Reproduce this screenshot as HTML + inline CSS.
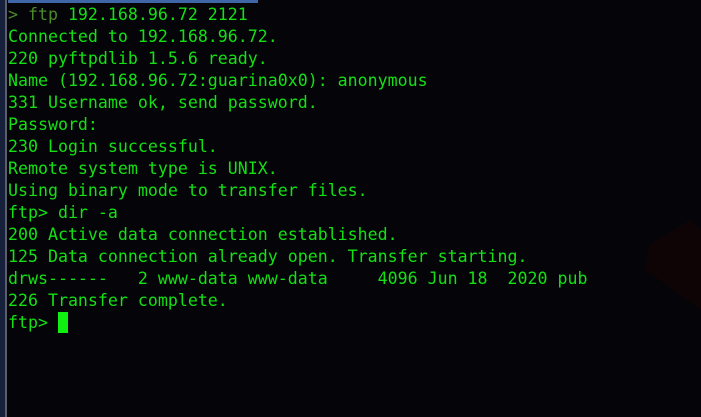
<!DOCTYPE html><html><head><style>
body{margin:0;width:701px;height:417px;overflow:hidden;background:#050408;position:relative;font-family:"DejaVu Sans Mono","Liberation Mono",monospace;}
.l{position:absolute;left:0;top:0;width:5px;height:417px;background:#16203a}
.g{position:absolute;left:5px;top:0;width:2px;height:417px;background:#5a5e66}
.b{position:absolute;left:8px;top:0;width:250px;height:3px;background:#3f67a8}
pre{position:absolute;left:8px;top:4px;margin:0;font-size:16.6px;line-height:22px;color:#14e014;font-family:inherit}
.d{color:#4a8a2a}
.c{display:inline-block;width:10px;height:21px;background:#10f010;vertical-align:-5px}
</style></head><body>
<div class="l"></div><div class="g"></div><div class="b"></div>
<svg style="position:absolute;left:600px;top:210px" width="101" height="207"><polygon points="50,35 90,10 101,20 101,100 60,70 45,60" fill="#0f0405"/></svg>
<pre><span class="d">&gt; ftp</span> 192.168.96.72 2121
Connected to 192.168.96.72.
220 pyftpdlib 1.5.6 ready.
Name (192.168.96.72:guarina0x0): anonymous
331 Username ok, send password.
Password:
230 Login successful.
Remote system type is UNIX.
Using binary mode to transfer files.
ftp&gt; dir -a
200 Active data connection established.
125 Data connection already open. Transfer starting.
drws------   2 www-data www-data     4096 Jun 18  2020 pub
226 Transfer complete.
ftp&gt; <span class="c"></span></pre>
</body></html>
